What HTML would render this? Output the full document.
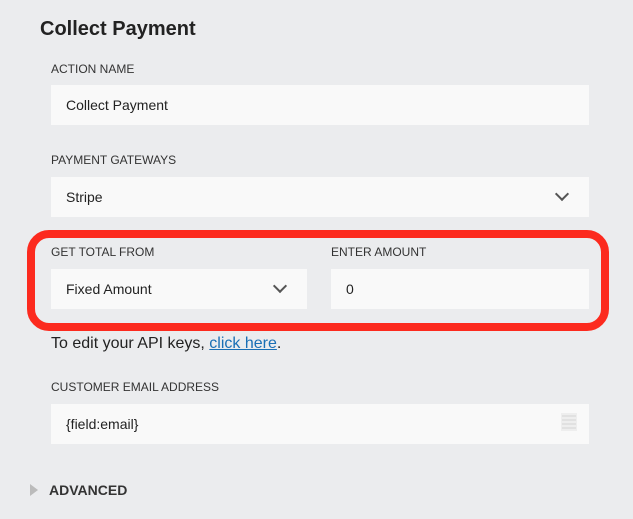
<!DOCTYPE html><html><head><style>
body{margin:0;width:633px;height:519px;background:#ebecee;font-family:"Liberation Sans",sans-serif;color:#333;position:relative;overflow:hidden}
div,span{position:absolute}
.lab{font-size:12px;color:#333;left:51px}
.in{background:#f9f9f9;height:40px;font-size:14px;line-height:40px;padding-left:15px;box-sizing:border-box;color:#222}
.chev{width:8px;height:8px;border-right:2.5px solid #555;border-bottom:2.5px solid #555;transform:rotate(45deg)}
</style></head><body>
<div style="left:40px;top:18px;font-size:20px;font-weight:bold;color:#222">Collect Payment</div>
<div class="lab" style="top:62px">ACTION NAME</div>
<div class="in" style="left:51px;top:85px;width:538px">Collect Payment</div>
<div class="lab" style="top:153px">PAYMENT GATEWAYS</div>
<div class="in" style="left:51px;top:177px;width:538px">Stripe<span class="chev" style="right:22px;top:12px"></span></div>
<div style="left:27px;top:230px;width:582px;height:101px;box-sizing:border-box;border:8px solid #fc2a1e;border-radius:22px"></div>
<div class="lab" style="top:245px">GET TOTAL FROM</div>
<div class="lab" style="top:245px;left:331px">ENTER AMOUNT</div>
<div class="in" style="left:51px;top:269px;width:256px">Fixed Amount<span class="chev" style="right:22px;top:12px"></span></div>
<div class="in" style="left:331px;top:269px;width:258px">0</div>
<div style="left:51px;top:335px;font-size:16px;color:#222">To edit your API keys, <span style="position:static;color:#1a6fb5;text-decoration:underline">click here</span>.</div>
<div class="lab" style="top:380px">CUSTOMER EMAIL ADDRESS</div>
<div class="in" style="left:51px;top:404px;width:538px">{field:email}
<svg style="position:absolute;right:12px;top:9px" width="16" height="18"><rect width="16" height="18" fill="#eee"/><g stroke="#ddd" stroke-width="1.5"><line x1="1" y1="3" x2="15" y2="3"/><line x1="1" y1="7" x2="15" y2="7"/><line x1="1" y1="11" x2="15" y2="11"/><line x1="1" y1="15" x2="15" y2="15"/></g></svg></div>
<svg style="position:absolute;left:30px;top:484px" width="8" height="12"><path d="M0 0L8 6L0 12Z" fill="#bbb"/></svg>
<div style="left:49px;top:482px;font-size:14px;font-weight:bold;color:#333">ADVANCED</div>
</body></html>
